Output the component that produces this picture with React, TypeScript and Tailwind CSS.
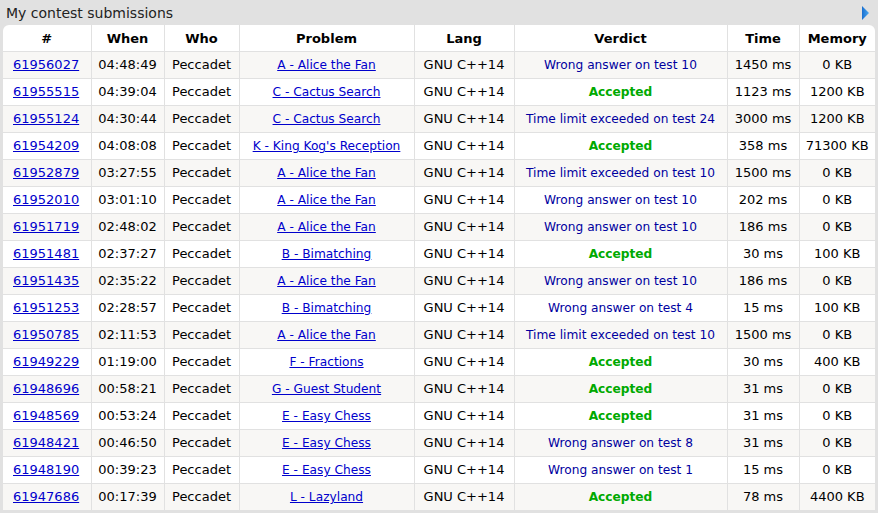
import React from "react";

type Row = [string, string, string, string, boolean, string, string];

const rows: Row[] = [
  ["61956027", "04:48:49", "A - Alice the Fan", "Wrong answer on test 10", false, "1450 ms", "0 KB"],
  ["61955515", "04:39:04", "C - Cactus Search", "Accepted", true, "1123 ms", "1200 KB"],
  ["61955124", "04:30:44", "C - Cactus Search", "Time limit exceeded on test 24", false, "3000 ms", "1200 KB"],
  ["61954209", "04:08:08", "K - King Kog's Reception", "Accepted", true, "358 ms", "71300 KB"],
  ["61952879", "03:27:55", "A - Alice the Fan", "Time limit exceeded on test 10", false, "1500 ms", "0 KB"],
  ["61952010", "03:01:10", "A - Alice the Fan", "Wrong answer on test 10", false, "202 ms", "0 KB"],
  ["61951719", "02:48:02", "A - Alice the Fan", "Wrong answer on test 10", false, "186 ms", "0 KB"],
  ["61951481", "02:37:27", "B - Bimatching", "Accepted", true, "30 ms", "100 KB"],
  ["61951435", "02:35:22", "A - Alice the Fan", "Wrong answer on test 10", false, "186 ms", "0 KB"],
  ["61951253", "02:28:57", "B - Bimatching", "Wrong answer on test 4", false, "15 ms", "100 KB"],
  ["61950785", "02:11:53", "A - Alice the Fan", "Time limit exceeded on test 10", false, "1500 ms", "0 KB"],
  ["61949229", "01:19:00", "F - Fractions", "Accepted", true, "30 ms", "400 KB"],
  ["61948696", "00:58:21", "G - Guest Student", "Accepted", true, "31 ms", "0 KB"],
  ["61948569", "00:53:24", "E - Easy Chess", "Accepted", true, "31 ms", "0 KB"],
  ["61948421", "00:46:50", "E - Easy Chess", "Wrong answer on test 8", false, "31 ms", "0 KB"],
  ["61948190", "00:39:23", "E - Easy Chess", "Wrong answer on test 1", false, "15 ms", "0 KB"],
  ["61947686", "00:17:39", "L - Lazyland", "Accepted", true, "78 ms", "4400 KB"],
];

const widths = [88, 73, 75, 175, 100, 213, 72, 76];

export default function App() {
  return (
    <div
      className="w-[878px] h-[513px] bg-[#e1e1e1] overflow-hidden text-[13px] text-black"
      style={{ fontFamily: "'DejaVu Sans', Verdana, sans-serif" }}
    >
      <div className="h-[25px] flex items-center justify-between pl-[6px] pr-[8px]">
        <span className="text-[14px] text-[#222] leading-none">My contest submissions</span>
        <svg width="9" height="14" viewBox="0 0 9 14">
          <defs>
            <linearGradient id="tri" x1="0" y1="0" x2="1" y2="0">
              <stop offset="0" stopColor="#1a6fd0" />
              <stop offset="1" stopColor="#4aa8f0" />
            </linearGradient>
          </defs>
          <polygon points="1,0 8,7 1,14" fill="url(#tri)" />
        </svg>
      </div>
      <div className="ml-[3px] w-[872px] bg-white rounded-t-[6px] overflow-hidden">
        <table className="table-fixed border-collapse w-[872px]">
          <colgroup>
            {widths.map((w, i) => (
              <col key={i} style={{ width: w }} />
            ))}
          </colgroup>
          <thead>
            <tr className="h-[26px]">
              {["#", "When", "Who", "Problem", "Lang", "Verdict", "Time", "Memory"].map((h, i) => (
                <th
                  key={h}
                  className={`font-bold text-center border-b border-[#e1e1e1] pt-[1px] ${i > 0 ? "border-l" : ""}`}
                >
                  {h}
                </th>
              ))}
            </tr>
          </thead>
          <tbody>
            {rows.map((r, idx) => (
              <tr key={r[0]} className={`h-[27px] ${idx % 2 === 0 ? "bg-[#f8f7f5]" : "bg-white"}`}>
                <td className="pl-[10px] border-b border-[#e1e1e1]">
                  <a className="text-[#0000cc] underline">{r[0]}</a>
                </td>
                <td className="text-center border-l border-b border-[#e1e1e1]">{r[1]}</td>
                <td className="text-center border-l border-b border-[#e1e1e1]">Peccadet</td>
                <td className="text-center border-l border-b border-[#e1e1e1] text-[12.2px] pt-[2px]">
                  <a className="text-[#0000cc] underline whitespace-nowrap">{r[2]}</a>
                </td>
                <td className="text-center border-l border-b border-[#e1e1e1]">GNU C++14</td>
                <td className="text-center border-l border-b border-[#e1e1e1] whitespace-nowrap text-[12.2px] pt-[2px]">
                  {r[4] ? (
                    <span className="text-[#00a900] font-bold">{r[3]}</span>
                  ) : (
                    <span className="text-[#0000a0]">{r[3]}</span>
                  )}
                </td>
                <td className="text-center border-l border-b border-[#e1e1e1]">{r[5]}</td>
                <td className="text-center border-l border-b border-[#e1e1e1]">{r[6]}</td>
              </tr>
            ))}
          </tbody>
        </table>
      </div>
    </div>
  );
}
